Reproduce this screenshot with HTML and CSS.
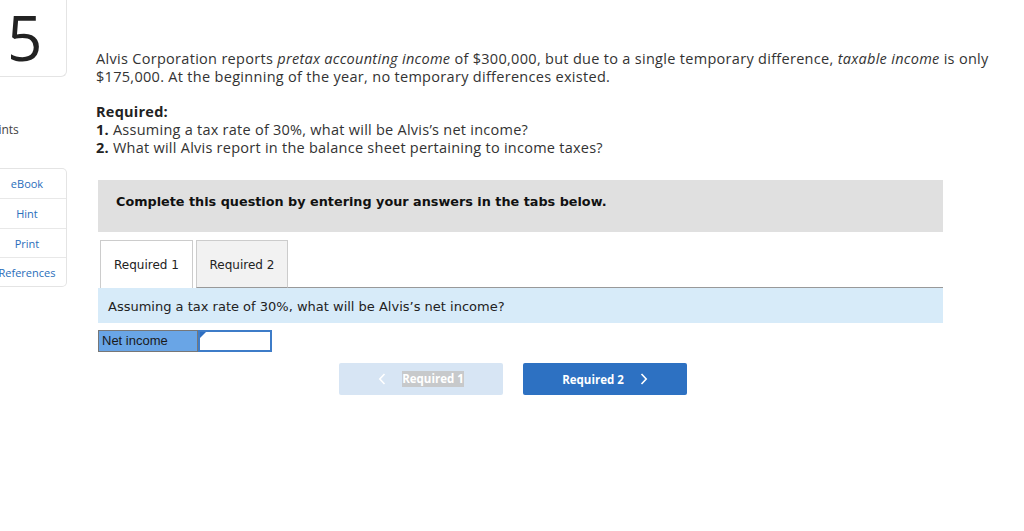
FILE: index.html
```html
<!DOCTYPE html>
<html>
<head>
<meta charset="utf-8">
<link rel="stylesheet" href="styles.css">
</head>
<body>
<div class="page">
  <aside class="side">
    <div class="qnum">5</div>
    <div class="points">Points</div>
    <ul class="tools">
      <li>eBook</li>
      <li>Hint</li>
      <li>Print</li>
      <li>References</li>
    </ul>
  </aside>
  <main class="main">
    <p class="intro">Alvis Corporation reports <em>pretax accounting income</em> of $300,000, but due to a single temporary difference, <em>taxable income</em> is only $175,000. At the beginning of the year, no temporary differences existed.</p>
    <div class="req">
      <div class="req-title">Required:</div>
      <div><b>1.</b> Assuming a tax rate of 30%, what will be Alvis’s net income?</div>
      <div><b>2.</b> What will Alvis report in the balance sheet pertaining to income taxes?</div>
    </div>
    <div class="banner">Complete this question by entering your answers in the tabs below.</div>
    <div class="tabs">
      <div class="tab active">Required 1</div>
      <div class="tab">Required 2</div>
      <div class="tab-rest"></div>
    </div>
    <div class="prompt">Assuming a tax rate of 30%, what will be Alvis’s net income?</div>
    <div class="answer">
      <div class="label">Net income</div>
      <div class="input"><span class="flag"></span></div>
    </div>
    <div class="nav">
      <div class="btn prev"><svg class="chev" width="8" height="12" viewBox="0 0 8 12"><path d="M6.5 1 L1.8 6 L6.5 11" fill="none" stroke="#fff" stroke-width="1.6"/></svg><span class="sel">Required 1</span></div>
      <div class="btn next">Required 2<svg class="chev" width="8" height="12" viewBox="0 0 8 12"><path d="M1.5 1 L6.2 6 L1.5 11" fill="none" stroke="#fff" stroke-width="1.6"/></svg></div>
    </div>
  </main>
</div>
</body>
</html>
```

FILE: styles.css
```css
* { box-sizing: border-box; }
html, body { margin: 0; padding: 0; background: #fff; }
body { font-family: "Open Sans", "Liberation Sans", sans-serif; color: #333; overflow: hidden; }
.page { display: flex; width: 1024px; height: 531px; }
.side { width: 67px; flex: none; }
.qnum {
  width: 67px; height: 77px;
  border: 1px solid #e4e4e4; border-top: none; border-left: none;
  border-bottom-right-radius: 6px;
  font-size: 62px; line-height: 74px; color: #222; padding-left: 7px;
  font-family: "Open Sans", sans-serif;
}
.points { margin-left: -16px; margin-top: 45px; font-size: 12px; color: #444; line-height: 16px; white-space: nowrap; }
.tools {
  list-style: none; margin: 30px 0 0 0; padding: 0; width: 67px;
  border: 1px solid #e4e4e4; border-left: none; border-radius: 0 5px 5px 0;
}
.tools li {
  height: 29.3px; line-height: 29px; text-align: center; padding-left: 0; margin-left: -12px;
  font-size: 11px; color: #2a6ebb; border-top: 1px solid #e8e8e8; white-space: nowrap;
}
.tools li:first-child { border-top: none; }
.main { flex: none; width: 930px; margin-left: 29px; padding-top: 50px; }
.intro { margin: 0; font-size: 14.5px; line-height: 18px; color: #333; width: 905px; letter-spacing: 0.3px; }
.req { margin-top: 17px; font-size: 14.5px; line-height: 18px; color: #333; letter-spacing: 0.25px; }
.req-title, .req b { font-weight: 700; color: #222; }
.banner {
  margin: 23px 0 0 2px; width: 845px; height: 52px; background: #e0e0e0;
  font-family: "DejaVu Sans", Verdana, sans-serif; font-weight: 700; font-size: 12.8px;
  color: #111; padding: 14px 0 0 18px; line-height: 15px;
}
.tabs { display: flex; margin: 8px 0 0 2px; width: 845px; height: 48px; }
.tab {
  height: 48px; border: 1px solid #ccc; border-bottom: none;
  font-family: "DejaVu Sans", Verdana, sans-serif; font-size: 12px; color: #222;
  line-height: 48px;
}
.tab.active { width: 93px; margin-left: 2px; background: #fff; text-align: center; }
.tab:not(.active) { width: 92px; margin-left: 3px; background: #f2f2f2; text-align: center; border-bottom: 1px solid #999; }
.tab-rest { flex: 1; border-bottom: 1px solid #999; }
.prompt {
  margin-left: 2px; width: 845px; height: 35px; background: #d7ebf9;
  font-family: "DejaVu Sans", Verdana, sans-serif; font-size: 13px; color: #222;
  padding-left: 10px; line-height: 37px;
}
.answer { display: flex; margin: 7px 0 0 2px; height: 22px; }
.label {
  width: 100px; background: #69a5e6; border: 1px solid #777;
  font-family: "Liberation Sans", Arial, sans-serif; font-size: 13px; color: #1a1a1a;
  line-height: 20px; padding-left: 3px;
}
.input { position: relative; width: 74px; border: 2px solid #3e7cc8; background: #fff; }
.flag {
  position: absolute; left: 0; top: 0; width: 0; height: 0;
  border-top: 6px solid #2e6fc2; border-right: 6px solid transparent;
}
.nav { display: flex; gap: 20px; margin: 11px 0 0 243px; }
.btn {
  width: 164px; height: 32px; border-radius: 2px; display: flex; align-items: center; justify-content: center;
  font-family: "Open Sans", sans-serif; font-weight: 700; font-size: 11.5px; color: #fff;
}
.prev { background: #d7e5f4; }
.next { background: #2d71c2; }
.prev .chev { margin-right: 16px; }
.next .chev { margin-left: 16px; }
.sel { background: #c7c9cb; padding: 0; line-height: 16px; }
```
